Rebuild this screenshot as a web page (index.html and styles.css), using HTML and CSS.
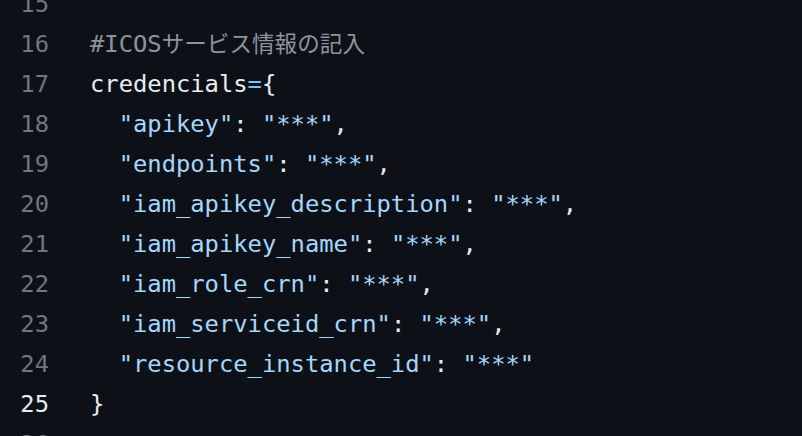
FILE: index.html
```html
<!DOCTYPE html>
<html lang="ja">
<head>
<meta charset="utf-8">
<link rel="stylesheet" href="styles.css">
</head>
<body>
<div class="code">
  <div class="line"><span class="num">15</span><span class="src"></span></div>
  <div class="line"><span class="num">16</span><span class="src"><span class="c">#ICOS<span class="jp">サービス情報の記入</span></span></span></div>
  <div class="line"><span class="num">17</span><span class="src">credencials<span class="k">=</span>{</span></div>
  <div class="line"><span class="num">18</span><span class="src">  <span class="s">"apikey"</span>: <span class="s">"***"</span>,</span></div>
  <div class="line"><span class="num">19</span><span class="src">  <span class="s">"endpoints"</span>: <span class="s">"***"</span>,</span></div>
  <div class="line"><span class="num">20</span><span class="src">  <span class="s">"iam_apikey_description"</span>: <span class="s">"***"</span>,</span></div>
  <div class="line"><span class="num">21</span><span class="src">  <span class="s">"iam_apikey_name"</span>: <span class="s">"***"</span>,</span></div>
  <div class="line"><span class="num">22</span><span class="src">  <span class="s">"iam_role_crn"</span>: <span class="s">"***"</span>,</span></div>
  <div class="line"><span class="num">23</span><span class="src">  <span class="s">"iam_serviceid_crn"</span>: <span class="s">"***"</span>,</span></div>
  <div class="line"><span class="num">24</span><span class="src">  <span class="s">"resource_instance_id"</span>: <span class="s">"***"</span></span></div>
  <div class="line active"><span class="num">25</span><span class="src">}</span></div>
  <div class="line"><span class="num">26</span><span class="src"></span></div>
</div>
</body>
</html>
```
FILE: styles.css
```css
html, body {
  margin: 0;
  padding: 0;
  background: #0d1117;
  overflow: hidden;
}
body {
  width: 802px;
  height: 436px;
}
.code {
  margin-top: -16px;
  font-family: "DejaVu Sans Mono", "Noto Sans CJK JP", monospace;
  font-size: 23.8px;
  line-height: 40px;
  color: #e6edf3;
}
.line {
  display: flex;
  height: 40px;
  white-space: pre;
}
.num {
  width: 49px;
  text-align: right;
  color: #6e7681;
  flex: none;
}
.active .num {
  color: #e6edf3;
}
.src {
  margin-left: 41px;
}
.c {
  color: #8b949e;
}
.jp {
  font-size: 22.6px;
}
.k {
  color: #79c0ff;
}
.s {
  color: #a5d6ff;
}
```
